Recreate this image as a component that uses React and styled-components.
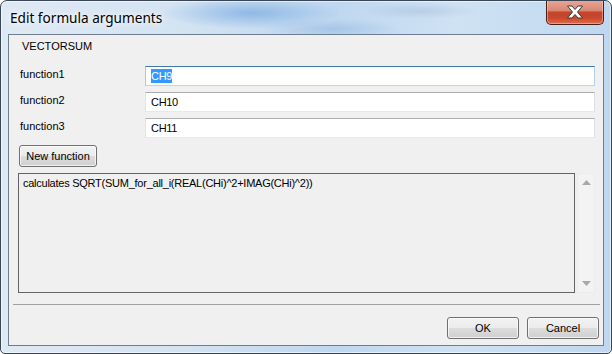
import React from 'react'
import styled, { createGlobalStyle } from 'styled-components'

const GlobalStyle = createGlobalStyle`
    html, body {
        margin: 0;
        padding: 0;
        background: #ffffff;
    }
    body {
        font-family: "Liberation Sans", Arial, sans-serif;
        font-size: 11px;
        color: #000;
    }
`

const Frame = styled.div`
    box-sizing: border-box;
    width: 612px;
    height: 354px;
    border: 1px solid #3a4656;
    border-radius: 7px 7px 5px 5px;
    padding: 0 7px 7px 7px;
    display: flex;
    flex-direction: column;
    overflow: hidden;
    background:
        radial-gradient(ellipse 90px 16px at 250px 12px, rgba(70, 140, 215, 0.45), rgba(70, 140, 215, 0) 100%),
        radial-gradient(ellipse 70px 10px at 330px 28px, rgba(80, 135, 200, 0.22), rgba(80, 135, 200, 0) 100%),
        radial-gradient(ellipse 60px 8px at 420px 10px, rgba(90, 120, 160, 0.16), rgba(90, 120, 160, 0) 100%),
        linear-gradient(90deg, #dfe9f4 0%, #d3e3f2 30%, #bfd7f0 55%, #cfe2f4 75%, #bfd7ef 100%);
    box-shadow: inset 0 0 0 1px rgba(255, 255, 255, 0.55);
`

const TitleBar = styled.div`
    height: 33px;
    display: flex;
    align-items: flex-start;
    justify-content: space-between;
    flex: 0 0 auto;
`

const Title = styled.div`
    font-family: "Noto Sans", "Open Sans", sans-serif;
    font-size: 13.6px;
    color: #000;
    margin-top: 7px;
    margin-left: 2px;
    text-shadow: 0 0 8px rgba(255, 255, 255, 0.9), 0 0 4px rgba(255, 255, 255, 0.9);
`

const CloseButton = styled.div`
    box-sizing: border-box;
    width: 58px;
    height: 25px;
    margin-top: -1px;
    border: 1px solid #4a1f18;
    border-top: none;
    border-radius: 0 0 5px 5px;
    display: flex;
    align-items: center;
    justify-content: center;
    background:
        linear-gradient(180deg, #e9a897 0%, #d98772 45%, #c4452c 50%, #c8472d 75%, #e06c4e 100%);
    box-shadow: inset 0 0 0 1px rgba(255, 220, 210, 0.45);
`

const Client = styled.div`
    flex: 1 1 auto;
    border: 1px solid #6e7e90;
    background: #f0f0f0;
    display: flex;
    flex-direction: column;
`

const Content = styled.div`
    padding: 5px 8px 0 10px;
    display: flex;
    flex-direction: column;
`

const FormulaName = styled.div`
    height: 13px;
    line-height: 13px;
    margin-left: 3px;
    font-size: 11px;
`

const ArgGrid = styled.div`
    display: grid;
    grid-template-columns: 126px 1fr;
    row-gap: 6px;
    margin-top: 13px;
`

const ArgLabel = styled.div`
    height: 20px;
    line-height: 16px;
    padding-left: 1px;
`

const ArgInput = styled.div`
    box-sizing: border-box;
    height: 20px;
    border: 1px solid;
    border-color: ${p => p.focused ? '#3d7bad #b5cfe7 #b7d9ed #a4c9e3' : '#abadb3 #dbdfe6 #e3e9ef #e2e3ea'};
    background: #fff;
    padding-left: 5px;
    display: flex;
    align-items: center;
    font-size: 11px;
    letter-spacing: -0.3px;
`

const Selected = styled.span`
    background: #3399ff;
    color: #fff;
    padding: 1px 0;
`

const Button = styled.div`
    box-sizing: border-box;
    height: 22px;
    width: ${p => p.width}px;
    border: 1px solid #707070;
    border-radius: 3px;
    display: flex;
    align-items: center;
    justify-content: center;
    font-size: 11px;
    background: linear-gradient(180deg, #f2f2f2 0%, #ebebeb 50%, #dddddd 51%, #cfcfcf 100%);
    box-shadow: inset 0 0 0 1px rgba(255, 255, 255, 0.7);
`

const NewButtonRow = styled.div`
    margin-top: 7px;
    display: flex;
`

const DescRow = styled.div`
    margin-top: 6px;
    margin-left: -1px;
    height: 120px;
    display: flex;
    gap: 2px;
`

const DescBox = styled.div`
    box-sizing: border-box;
    flex: 1 1 auto;
    border: 1px solid #646464;
    background: #f0f0f0;
    padding: 3px 4px;
    font-size: 11px;
    letter-spacing: -0.25px;
`

const ScrollBar = styled.div`
    box-sizing: border-box;
    width: 18px;
    flex: 0 0 auto;
    background: #f3f3f3;
    border: 1px solid #ececec;
    display: flex;
    flex-direction: column;
    justify-content: space-between;
    align-items: center;
    padding: 6px 0;
`

const Separator = styled.div`
    margin: 11px 3px 0 4px;
    height: 1px;
    background: #a0a0a0;
`

const Footer = styled.div`
    display: flex;
    justify-content: flex-end;
    gap: 8px;
    padding: 12px 4px 5px 0;
`

const Arrow = ({ down }) => (
    <svg width="9" height="5" viewBox="0 0 9 5">
        {down
            ? <path d="M0 0 H9 L4.5 5 Z" fill="#a8a8a8" />
            : <path d="M0 5 H9 L4.5 0 Z" fill="#a8a8a8" />}
    </svg>
)

const CloseGlyph = () => (
    <svg width="18" height="14" viewBox="0 0 18 14">
        <path
            d="M1.5 1 H6 L9 4.5 L12 1 H16.5 L11.5 7 L16.5 13 H12 L9 9.5 L6 13 H1.5 L6.5 7 Z"
            fill="#ffffff"
            stroke="#3b3b3b"
            strokeWidth="1"
            strokeLinejoin="round"
        />
    </svg>
)

const args = [
    { name: 'function1', value: 'CH9', focused: true },
    { name: 'function2', value: 'CH10' },
    { name: 'function3', value: 'CH11' },
]

export default function App() {
    return (
        <>
            <GlobalStyle />
            <Frame>
                <TitleBar>
                    <Title>Edit formula arguments</Title>
                    <CloseButton>
                        <CloseGlyph />
                    </CloseButton>
                </TitleBar>
                <Client>
                    <Content>
                        <FormulaName>VECTORSUM</FormulaName>
                        <ArgGrid>
                            {args.map(a => (
                                <React.Fragment key={a.name}>
                                    <ArgLabel>{a.name}</ArgLabel>
                                    <ArgInput focused={a.focused}>
                                        {a.focused ? <Selected>{a.value}</Selected> : a.value}
                                    </ArgInput>
                                </React.Fragment>
                            ))}
                        </ArgGrid>
                        <NewButtonRow>
                            <Button width={78}>New function</Button>
                        </NewButtonRow>
                        <DescRow>
                            <DescBox>calculates SQRT(SUM_for_all_i(REAL(CHi)^2+IMAG(CHi)^2))</DescBox>
                            <ScrollBar>
                                <Arrow />
                                <Arrow down />
                            </ScrollBar>
                        </DescRow>
                    </Content>
                    <Separator />
                    <Footer>
                        <Button width={72}>OK</Button>
                        <Button width={72}>Cancel</Button>
                    </Footer>
                </Client>
            </Frame>
        </>
    )
}
